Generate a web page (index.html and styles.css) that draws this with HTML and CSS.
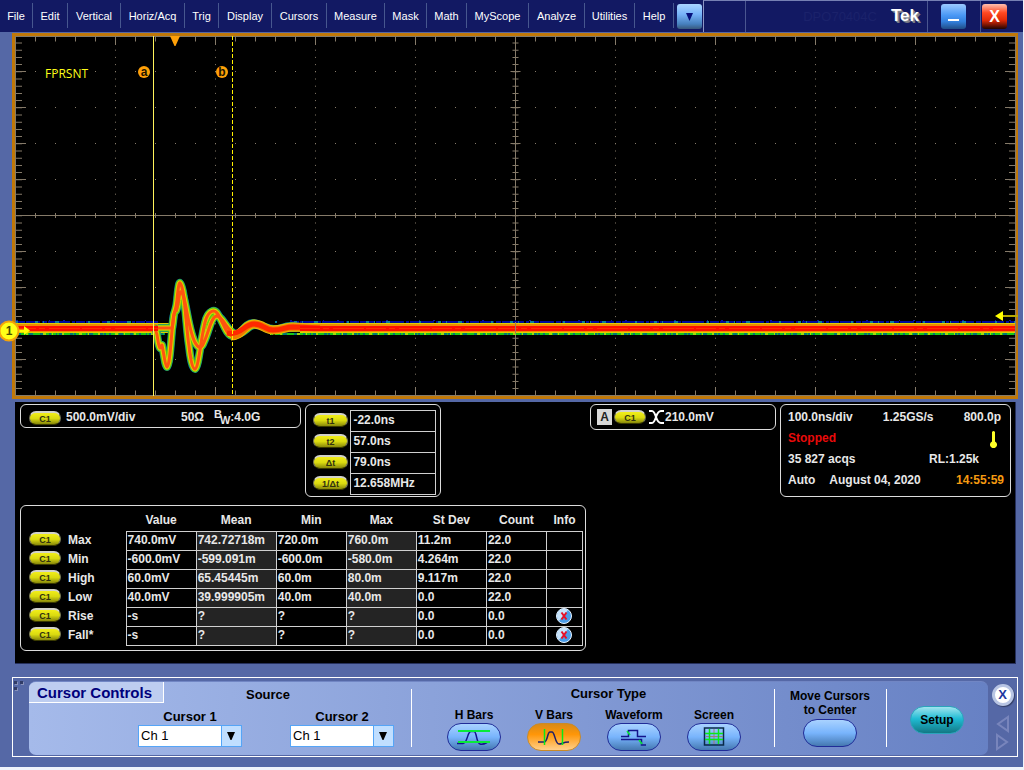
FILE: index.html
```html
<!DOCTYPE html>
<html lang="en">
<head>
<meta charset="utf-8">
<title>Tek oscilloscope</title>
<link rel="stylesheet" href="styles.css">
</head>
<body>
<div class="app">
  <header class="topbar">
    <nav class="menu" aria-label="Main menu">
      <button>File</button><button>Edit</button><button>Vertical</button><button>Horiz/Acq</button><button>Trig</button><button>Display</button><button>Cursors</button><button>Measure</button><button>Mask</button><button>Math</button><button>MyScope</button><button>Analyze</button><button>Utilities</button><button>Help</button>
    </nav>
    <button class="win more" aria-label="More menus"><svg width="7" height="9" viewBox="0 0 7 9"><path d="M0 1h7L3.500 9z" fill="#06107c"/></svg></button>
    <div class="titlebar">
      <span class="slot"></span>
      <span class="model">DPO70404C</span>
      <strong class="brand">Tek</strong>
      <span class="winslot"><button class="win min" aria-label="Minimize"><svg width="13" height="13" viewBox="0 0 13 13"><path d="M1 9h11v2H1z" fill="#fff"/></svg></button></span>
      <span class="winslot last"><button class="win close" aria-label="Close">X</button></span>
    </div>
  </header>

  <main>
    <svg class="scope" viewBox="0 32 1023 370" role="img" aria-label="Channel 1 waveform">
      <path d="M12 33H1018V399H12z" fill="#c07808"/>
      <path d="M15 36H1016V396H15z" fill="#000"/>
      <g fill="none" stroke="#857a69">
        <path d="M15.500 36V396M1015.500 36V396M15 36.500H1016M15 395.500H1016"/>
        <path d="M515.500 36V396M16 215.500H1015"/>
        <path stroke-width="5" stroke-dasharray="1 19" d="M35 39H1015M35 393H1015M35 215.500H1015"/>
        <path stroke-width="8" stroke-dasharray="1 99" d="M115 41H1015M115 391H1015"/>
        <path stroke-width="6" stroke-dasharray="1 6.200" d="M19 42.500V395M1012 42.500V395M515.500 42.500V395"/>
        <path stroke-width="10" stroke-dasharray="1 35" d="M21 71V395M1010 71V395M515.500 71V395"/>
        <path stroke-dasharray="1 6.200" d="M115.500 49.700V390M215.500 49.700V390M315.500 49.700V390M415.500 49.700V390M615.500 49.700V390M715.500 49.700V390M815.500 49.700V390M915.500 49.700V390"/>
        <path stroke-dasharray="1 19" d="M35 71.500H1010M35 107.500H1010M35 143.500H1010M35 179.500H1010M35 251.500H1010M35 287.500H1010M35 359.500H1010"/>
      </g>
      <g fill="none">
        <path stroke="#000a9c" stroke-width="2" stroke-dasharray="9 1 14 2 5 1 22 2 3 1" d="M16 322H158M290 322H1015"/>
        <path stroke="#0a7c9c" stroke-width="2" stroke-dasharray="2 17 3 5 1 11 4 29" d="M16 322H158M275 322H1015"/>
        <path stroke="#0a14a0" stroke-dasharray="2 31 1 13 2 47" d="M16 320.500H158M290 320.500H1015M16 334.500H158M290 334.500H1015"/>
        <path stroke="#007878" stroke-width="2" d="M16 334H165M275 334H1015"/>
        <path stroke="#18c818" stroke-width="2" stroke-dasharray="3 2 5 1 2 4 7 3 1 2" d="M16 334H165M270 334H1015"/>
        <path stroke="#a0d808" stroke-width="2" stroke-dasharray="1 9 2 15 3 6" d="M16 334H165M270 334H1015"/>
        <path stroke="#ddd000" stroke-width="10" d="M16 328H173M300 328H1015"/>
        <path stroke="#f08a00" stroke-width="8" d="M16 328H173M300 328H1015"/>
      </g>
      <defs>
        <path id="early" d="M154 328C158 330 157 343 160 348L162 345C164 354 165 366 167 367C170 365 171 339 173 320C174 310 176 312 177 300C178 289 179 282 180 283C185 287 186 329 189 346C190 356 192 369 195 369C199 368 201 334 206 319C209 311 214 309 217 313C223 321 226 336 233 336C241 336 244 323 253 323C261 323 264 330 272 330C280 330 283 326 291 326L310 328"/>
        <path id="late" d="M158 328H172C174 323 173 311 176 311C179 306 179 289 181 292C186 294 188 333 196 344C199 349 202 348 204 342C209 332 211 316 217 316C224 317 228 334 237 334C245 334 248 325 255 325C264 325 266 329 274 329C284 329 289 327 310 328"/>
      </defs>
      <g fill="none" stroke-linejoin="round">
        <g stroke="#0878a0" stroke-width="8"><use href="#early"/><use href="#late"/></g>
        <g stroke="#58c810" stroke-width="7"><use href="#early"/><use href="#late"/></g>
        <g stroke="#dfd400" stroke-width="5"><use href="#early"/><use href="#late"/></g>
        <path d="M171 340C173 317 174 315 178 302M184 306C187 333 189 352 193 359M200 350C204 327 208 319 214 315M176 316C178 310 179 304 180 300" stroke="#70d800"/>
        <g stroke="#ff5410" stroke-width="3"><use href="#early"/><use href="#late"/></g>
        <path d="M231 336C243 336 244 324 254 324C263 324 265 330 273 330C283 330 285 327 293 327L313 328" stroke="#e8b800" stroke-width="9"/>
        <path d="M231 336C243 336 244 324 254 324C263 324 265 330 273 330C283 330 285 327 293 327L313 328" stroke="#f07800" stroke-width="7"/>
        <path d="M227 333C241 336 244 324 254 324C263 324 265 330 273 330C283 330 285 327 293 327L320 328" stroke="#ff2800" stroke-width="5"/>
        <path stroke="#ff0c00" stroke-width="5" d="M16 328.500H158M300 328.500H1015"/>
        <path stroke="#ff3000" stroke-dasharray="20 3 6 4 31 2" d="M16 328.500H158M300 328.500H1015"/>
      </g>
      <path d="M515.500 322V334" stroke="#a07858"/>
      <path d="M153.500 36V396" stroke="#fff35a"/>
      <path d="M232.500 36V396" stroke="#fff000" stroke-dasharray="4 2"/>
      <path d="M170 36H180L175.500 46H174.500z" fill="#ffa008"/>
      <circle cx="144" cy="72" r="6" fill="#ffa008"/><circle cx="222" cy="72" r="6" fill="#ffa008"/>
      <text class="cursor-id" x="144" y="76">a</text><text class="cursor-id" x="222" y="76">b</text>
      <text class="trace-name" x="45" y="78">FPRSNT</text>
      <path d="M18 329.500H24V326L30 330.500L24 335V332H18z" fill="#ffff00"/>
      <circle cx="9" cy="331" r="9.500" fill="#ffff18" stroke="#f5a30a" stroke-width="2"/>
      <text class="channel-id" x="9" y="335">1</text>
      <path d="M995 316L1003 311V321z" fill="#ff0"/><path d="M1003 316H1018" stroke="#b8a800" stroke-width="2"/>
    </svg>

    <div class="readouts">
      <div class="status">
        <section class="box channel"><span class="pill">C1</span><span class="scale">500.0mV/div</span><span class="imp">50Ω</span><span class="bw"><sup>B</sup><sub>W</sub>:4.0G</span></section>
        <section class="box cursors">
          <table class="cursor-table">
            <tr><th scope="row"><span class="pill">t1</span></th><td>-22.0ns</td></tr>
            <tr><th scope="row"><span class="pill">t2</span></th><td>57.0ns</td></tr>
            <tr><th scope="row"><span class="pill">Δt</span></th><td>79.0ns</td></tr>
            <tr><th scope="row"><span class="pill">1/Δt</span></th><td>12.658MHz</td></tr>
          </table>
        </section>
        <section class="box trigger"><span class="badge-a">A</span><span class="pill">C1</span><svg width="15" height="14" viewBox="0 0 15 14" fill="none" stroke="#fff" stroke-width="2"><path d="M0 1H3C5 1 6 4 7 7S10 13 12 13H15M0 13H3C5 13 6 10 7 7S10 1 12 1H15"/></svg><span>210.0mV</span></section>
        <section class="box acquisition">
          <div class="line"><span>100.0ns/div</span><span>1.25GS/s</span><span class="inset">800.0p</span></div>
          <div class="line"><span class="stopped">Stopped</span><svg class="thermo" width="7" height="17" viewBox="0 0 7 17"><path d="M2 1Q3.500 -1 5 1V10.500A3.500 3.500 0 1 1 2 10.500z" fill="#ffff28"/></svg></div>
          <div class="line"><span>35 827 acqs</span><span class="record">RL:1.25k</span></div>
          <div class="line date"><span>Auto</span><span>August 04, 2020</span><time>14:55:59</time></div>
        </section>
      </div>
      <section class="box measurements">
        <table class="measure-table">
          <thead><tr><td class="src"></td><td class="name"></td><th class="w70">Value</th><th class="w80">Mean</th><th class="w70">Min</th><th class="w70">Max</th><th class="w70">St Dev</th><th class="w60">Count</th><th class="info">Info</th></tr></thead>
          <tbody>
            <tr><td><span class="pill">C1</span></td><th scope="row">Max</th><td>740.0mV</td><td>742.72718m</td><td>720.0m</td><td>760.0m</td><td>11.2m</td><td>22.0</td><td></td></tr>
            <tr><td><span class="pill">C1</span></td><th scope="row">Min</th><td>-600.0mV</td><td>-599.091m</td><td>-600.0m</td><td>-580.0m</td><td>4.264m</td><td>22.0</td><td></td></tr>
            <tr><td><span class="pill">C1</span></td><th scope="row">High</th><td>60.0mV</td><td>65.45445m</td><td>60.0m</td><td>80.0m</td><td>9.117m</td><td>22.0</td><td></td></tr>
            <tr><td><span class="pill">C1</span></td><th scope="row">Low</th><td>40.0mV</td><td>39.999905m</td><td>40.0m</td><td>40.0m</td><td>0.0</td><td>22.0</td><td></td></tr>
            <tr><td><span class="pill">C1</span></td><th scope="row">Rise</th><td>-s</td><td>?</td><td>?</td><td>?</td><td>0.0</td><td>0.0</td><td><button class="alert" aria-label="Rise error"><svg viewBox="0 0 16 16"><circle cx="8" cy="8" r="7.500" fill="#4a9ce8" stroke="#e8f4ff"/><path d="M1 8A7 7 0 0 1 12 2L3 13Q1 11 1 8" fill="#c8e4fc"/><path d="M5.500 4.500L10.500 11.500M10.500 4.500L5.500 11.500" stroke="#e81028" stroke-width="2"/></svg></button></td></tr>
            <tr><td><span class="pill">C1</span></td><th scope="row">Fall*</th><td>-s</td><td>?</td><td>?</td><td>?</td><td>0.0</td><td>0.0</td><td><button class="alert" aria-label="Fall error"><svg viewBox="0 0 16 16"><circle cx="8" cy="8" r="7.500" fill="#4a9ce8" stroke="#e8f4ff"/><path d="M1 8A7 7 0 0 1 12 2L3 13Q1 11 1 8" fill="#c8e4fc"/><path d="M5.500 4.500L10.500 11.500M10.500 4.500L5.500 11.500" stroke="#e81028" stroke-width="2"/></svg></button></td></tr>
          </tbody>
        </table>
      </section>
    </div>
  </main>

  <section class="controls" aria-label="Cursor Controls">
    <div class="grip"><svg width="10" height="10" viewBox="0 0 10 10"><path d="M1 1h3v3H1zM7 1h3v3H7zM1 7h3v3H1z" fill="#8791ba"/><path d="M0 0h3v3H0zM6 0h3v3H6zM0 6h3v3H0z" fill="#303b67"/></svg></div>
    <div class="control-body">
      <div class="source">
        <div class="source-head"><h2>Cursor Controls</h2><h3>Source</h3></div>
        <div class="fields">
          <div class="field"><label for="c1">Cursor 1</label><span class="combo"><select id="c1"><option>Ch 1</option></select><svg width="8" height="8" viewBox="0 0 8 8"><path d="M0 0h8L4.500 8H3.500z"/></svg></span></div>
          <div class="field"><label for="c2">Cursor 2</label><span class="combo"><select id="c2"><option>Ch 1</option></select><svg width="8" height="8" viewBox="0 0 8 8"><path d="M0 0h8L4.500 8H3.500z"/></svg></span></div>
        </div>
      </div>
      <div class="group types">
        <h3>Cursor Type</h3>
        <div class="type-row">
          <div class="choice"><label for="hb">H Bars</label><button id="hb" class="oval"><svg width="34" height="18" viewBox="0 0 34 18" fill="none"><path d="M0 15.500H6C11 15 10 3.500 14 3.500H17C20 3.500 19 15 23 16C26 17 29 15 30 14.500" stroke="#14148c" stroke-width="1.500"/><path d="M1 3H33M1 14H33" stroke="#08ea38" stroke-width="2"/></svg></button></div>
          <div class="choice"><label for="vb">V Bars</label><button id="vb" class="oval active" aria-pressed="true"><svg width="32" height="19" viewBox="0 0 32 19" fill="none"><path d="M0 15H6C10 15 9 5 12 5H14C17 5 17 17 21 17C25 17 24 15 31 15" stroke="#202068" stroke-width="1.500"/><path d="M6.500 2V18M24.500 2V18" stroke="#08ea18" stroke-width="1.500"/></svg></button></div>
          <div class="choice"><label for="wf">Waveform</label><button id="wf" class="oval"><svg width="28" height="18" viewBox="0 0 28 18" fill="none"><path d="M1 8.500H8.500V2.500H17.500V8.500H26M1 11.500H21.500V17H26" stroke="#14148c" stroke-width="1.500"/><path d="M7 3L10 7M19 12L22 16" stroke="#08e838" stroke-width="1.500"/></svg></button></div>
          <div class="choice"><label for="sc">Screen</label><button id="sc" class="oval"><svg width="22" height="19" viewBox="0 0 22 19" fill="none"><path d="M1.500 1H20.500V18H1.500z" stroke="#082a48" stroke-width="1.500"/><path d="M11 2V17M3 9.500H20" stroke="#a08070"/><path d="M6.500 2V17M15.500 2V17M2 6.500H20M2 12.500H20" stroke="#08e818" stroke-width="1.500"/></svg></button></div>
        </div>
      </div>
      <div class="group move"><label for="center">Move Cursors<br>to Center</label><button id="center" class="oval"></button></div>
      <div class="group setup-group"><button class="oval setup">Setup</button></div>
    </div>
    <div class="panel-tools">
      <button class="panel-close" aria-label="Close panel">X</button>
      <svg width="18" height="38" viewBox="0 0 18 38" fill="none" stroke="#7885bc" stroke-width="2"><path d="M14 2V16L4 9z"/><path d="M3 20V34L13 27z"/></svg>
    </div>
  </section>
</div>
</body>
</html>
```

FILE: styles.css
```css
* { box-sizing: border-box; }
body { margin: 0; background: #f0f4fb; font: bold 12px/14px "Liberation Sans", Arial, sans-serif; color: #e8e8e8; }
button, select { font: inherit; color: inherit; border: 0; padding: 0; margin: 0; }
h2, h3 { margin: 0; }
svg { display: block; }
.app { margin-right: 1px; background: #5568a6; padding-bottom: 10px; }

.topbar { display: flex; height: 32px; background: #121963; }
.menu { display: grid; flex: none; grid-template-columns: 33px 35px 53px 64px 34px 53px 55px 58px 42px 40px 62px 56px 50px 39px; padding: 3px 0 4px; }
.menu button { background: none; border-right: 1px solid #47578f; font-size: 11px; font-weight: normal; color: #fff; text-align: center; white-space: nowrap; }
.win { width: 25px; height: 25px; border-radius: 3px; background: linear-gradient(#a9d4ff, #78b4fa 40%, #4680be 80%, #38587c); display: grid; place-items: center; flex: none; }
.more { margin: 4px 1px 0 3px; }
.titlebar { flex: 1; display: flex; border-left: 1px solid #8d96c4; border-top: 1px solid #7680b4; align-items: stretch; }
.slot { width: 42px; border-right: 1px solid #4a5690; }
.model { flex: 1; text-align: right; font-size: 13px; font-weight: normal; line-height: 31px; color: #1b226b; padding-right: 14px; }
.brand { font-size: 17px; line-height: 29px; color: #fff; text-shadow: 1px 1px #83858f, 2px 2px #777984; padding-right: 8px; }
.winslot { width: 53px; border-left: 1px solid #4a5690; padding: 3px 0 0 13px; }
.winslot.last { width: 43px; padding-left: 1px; }
.min { background: linear-gradient(#9bc9ff, #4a98f5 45%, #3380dd 70%, #204d86); }
.close { background: linear-gradient(#ffc0b0, #ff4822 35%, #e02a08 65%, #200400); color: #fff; font-size: 16px; }

.scope { width: 100%; height: auto; }
.cursor-id, .channel-id { font: bold 12px "Liberation Sans", Arial, sans-serif; text-anchor: middle; fill: #201400; }
.channel-id { fill: #4a4a00; }
.trace-name { font: 12px "Liberation Sans Narrow", "Open Sans", sans-serif; fill: #ffff18; }

.readouts { margin: 0 7px 0 15px; padding: 2px 4px 12px 5px; background: #000; border: 1px solid #26305c; border-width: 0 1px 1px 0; }
.status { display: flex; align-items: flex-start; gap: 4px; margin-bottom: 8px; }
.box { border: 1px solid #dcdcdc; border-radius: 6px; }
.pill { display: block; width: 32px; height: 14px; border: 1px solid #77775a; border-top: 2px solid #d2d2ca; border-bottom-color: #393900; border-radius: 7px; background: linear-gradient(#f2ee18, #dada10 50%, #88880a); color: #303010; font-size: 9px; line-height: 12px; text-align: center; flex: none; }
.channel { display: flex; width: 281px; height: 24px; padding: 5px 8px; }
.channel .pill { margin-top: 1px; }
.scale { width: 115px; margin-left: 5px; }
.imp { width: 33px; }
.bw sup, .bw sub { font-size: 11px; line-height: 0; }
.bw sup { vertical-align: 3px; }
.bw sub { vertical-align: -3px; margin-left: -2px; }
.cursors { width: 136px; height: 93px; padding: 5px 4px 0 7px; }
.cursor-table, .measure-table { border-collapse: collapse; table-layout: fixed; }
.cursor-table th { width: 38px; padding: 0 0 2px; }
.cursor-table .pill { width: 35px; }
.cursor-table td { width: 85px; height: 21px; border: 1px solid #d0d0d0; padding: 0 2px 2px; }
.trigger { display: flex; align-items: center; width: 186px; height: 26px; padding: 0 6px; margin-left: auto; }
.badge-a { width: 15px; height: 16px; background: #d8d8d8; color: #222; line-height: 16px; text-align: center; margin-right: 2px; }
.trigger svg { margin: 0 1px 0 3px; }
.acquisition { width: 231px; height: 93px; padding: 1px 6px 6px 7px; display: flex; flex-direction: column; }
.line { flex: 1; display: flex; align-items: center; justify-content: space-between; }
.inset { margin-right: 3px; }
.stopped { color: #ea0a0a; }
.thermo { margin: 4px 7px 0 0; }
.record { margin-right: 25px; }
.date { justify-content: flex-start; gap: 14px; }
time { color: #f59a10; margin-left: auto; }

.measurements { width: 566px; padding: 0 2px 4px 8px; }
.measure-table { width: 100%; }
.measure-table thead tr { height: 25px; }
.measure-table thead th { padding: 3px 0 0; }
.src { width: 39px; }
.name { width: 58px; }
.w70 { width: 70px; }
.w80 { width: 80px; }
.w60 { width: 60px; }
.info { width: 36px; }
.measure-table tbody tr { height: 19px; }
.measure-table tbody td, .measure-table tbody th { padding: 0 1px 1px; text-align: left; }
.measure-table tbody td:first-child { padding: 0 0 3px; }
.measure-table tbody th { padding: 0 0 1px; }
.measure-table tbody td:nth-child(n+3) { border: 1px solid #d0d0d0; }
.measure-table tbody td:nth-child(4), .measure-table tbody td:nth-child(6) { background: #242424; }
.alert { display: block; width: 16px; height: 16px; margin: 0 auto; background: none; }
.alert svg { width: 16px; height: 16px; }

.controls { display: grid; grid-template-columns: 16px 1fr 29px; margin: 13px 5px 0 12px; border: 1px solid #fff; color: #000; }
.grip { padding: 3px 0 0 1px; }
.control-body { display: grid; grid-template-columns: 382fr 363fr 112fr 102fr; margin: 3px 0 1px; padding-bottom: 4px; border-radius: 7px; overflow: hidden; background: linear-gradient(90deg, #a5baea, #6781c4); border-top: 1px solid #7186c4; }
.source-head { display: flex; }
.source-head h2 { width: 135px; height: 21px; font-size: 15px; line-height: 21px; padding-left: 8px; color: #00007c; background: #bdcdf0; border: solid #fff; border-width: 0 1px 1px 0; }
.source-head h3 { padding-left: 82px; font-size: 13px; line-height: 25px; }
.fields { display: flex; gap: 48px; padding-left: 109px; padding-top: 1px; }
.field { width: 104px; }
.field label { display: block; font-size: 13px; line-height: 17px; text-align: center; }
.combo { display: grid; grid-template-columns: 82px 1fr; align-items: center; justify-items: center; border: 1px solid #55a5f7; background: linear-gradient(90deg, #fff 82px, #55a5f7 82px, #55a5f7 83px, #c0deff 83px); }
.combo select { grid-area: 1 / 1 / 2 / 3; width: 100%; height: 20px; appearance: none; background: none; padding-left: 2px; font-size: 13px; font-weight: normal; }
.combo svg { grid-area: 1 / 2 / 2 / 3; pointer-events: none; }
.group { padding-top: 7px; background: linear-gradient(#fff, #fff) 0 7px / 1px calc(100% - 11px) no-repeat; }
.types h3 { text-align: center; font-size: 13px; line-height: 10px; padding-left: 32px; }
.type-row { display: flex; gap: 26px; padding: 8px 0 0 36px; }
.choice { width: 54px; display: flex; flex-direction: column; align-items: center; }
.choice label { line-height: 16px; white-space: nowrap; }
.oval { width: 54px; height: 28px; display: grid; place-items: center; border: 1px solid #202c98; border-radius: 14px; background: linear-gradient(#a9d2ff, #78b4fc 50%, #4578b0); }
.active { border-color: #c98a28; background: linear-gradient(#d88a18, #ff9608 40%, #ffd08c); }
.move { display: flex; flex-direction: column; align-items: center; text-align: center; gap: 2px; }
.setup-group { display: grid; place-items: center; }
.setup { border-color: #2aa4bc; background: linear-gradient(#a0e4ee, #20bcd4 45%, #127884); }
.panel-tools { display: flex; flex-direction: column; align-items: center; padding-top: 6px; gap: 9px; }
.panel-close { width: 22px; height: 22px; border: 3px solid #b8c5e4; border-radius: 11px; background: #fff; color: #2038a0; font-size: 13px; line-height: 16px; box-shadow: 1px 1px 1px #323d66; }
```
